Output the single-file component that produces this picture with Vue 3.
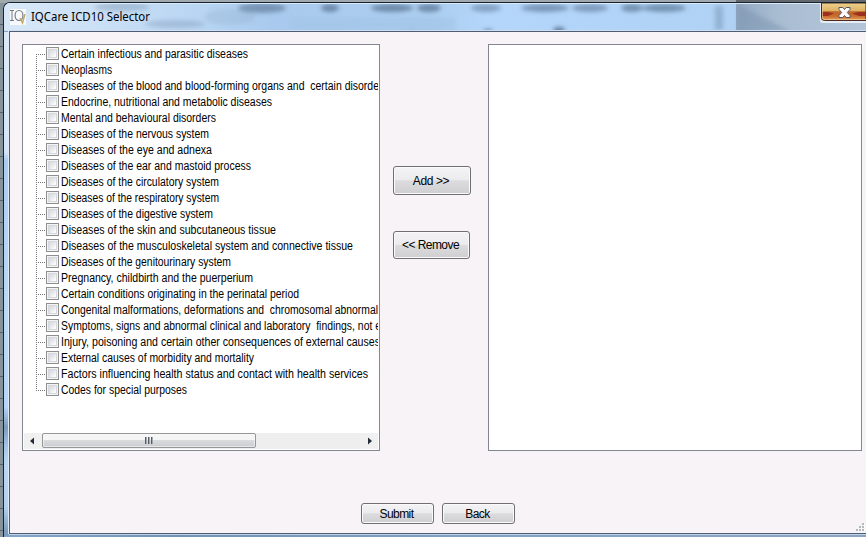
<script setup>
const nodes = [
  ['Certain infectious and parasitic diseases', 187],
  ['Neoplasms', 51],
  ['Diseases of the blood and blood-forming organs and \u00a0certain disorde', 318],
  ['Endocrine, nutritional and metabolic diseases', 211],
  ['Mental and behavioural disorders', 155],
  ['Diseases of the nervous system', 148],
  ['Diseases of the eye and adnexa', 151],
  ['Diseases of the ear and mastoid process', 190],
  ['Diseases of the circulatory system', 158],
  ['Diseases of the respiratory system', 158],
  ['Diseases of the digestive system', 152],
  ['Diseases of the skin and subcutaneous tissue', 215],
  ['Diseases of the musculoskeletal system and connective tissue', 292],
  ['Diseases of the genitourinary system', 170],
  ['Pregnancy, childbirth and the puerperium', 192],
  ['Certain conditions originating in the perinatal period', 238],
  ['Congenital malformations, deformations and \u00a0chromosomal abnormal', 317],
  ['Symptoms, signs and abnormal clinical and laboratory \u00a0findings, not e', 320],
  ['Injury, poisoning and certain other consequences of external causes', 319],
  ['External causes of morbidity and mortality', 193],
  ['Factors influencing health status and contact with health services', 307],
  ['Codes for special purposes', 126]
]
// Reflections of the window behind the glass title bar: [x, y, half width, half height, opacity]
const smudges = [
  [122, 7, 28, 4, 0.3], [262, 8, 24, 5, 0.6], [330, 8, 9, 4, 0.7], [392, 8, 21, 4, 0.7],
  [429, 8, 12, 4, 0.7], [486, 8, 15, 4, 0.5], [545, 8, 24, 4, 0.6], [590, 8, 18, 4, 0.55],
  [632, 8, 11, 4, 0.65], [664, 8, 22, 4, 0.65], [175, 24, 30, 4, 0.25], [488, 31, 5, 2, 0.7],
  [559, 30, 6, 3, 0.9], [412, 31, 3, 1, 0.3], [230, 17, 26, 8, 0.12]
]
</script>

<template>
  <div class="desktop">
    <div class="window">
      <header class="titlebar">
        <svg class="glass" width="862" height="28" viewBox="4 3 862 28">
          <defs>
            <linearGradient id="sky" x1="0" x2="1">
              <stop offset="0" stop-color="#d8e8f8" />
              <stop offset=".12" stop-color="#c9dff5" />
              <stop offset=".25" stop-color="#b5d3f2" />
              <stop offset=".31" stop-color="#a9caee" />
              <stop offset=".5" stop-color="#acceef" />
              <stop offset=".56" stop-color="#b4d6fb" />
              <stop offset=".82" stop-color="#b0d2f5" />
              <stop offset="1" stop-color="#b0c9e2" />
            </linearGradient>
            <linearGradient id="edge" x1="0" x2="1">
              <stop offset="0" stop-color="#8fa5be" />
              <stop offset=".12" stop-color="#9ab0c8" />
              <stop offset=".32" stop-color="#a9bdd2" />
              <stop offset="1" stop-color="#b4c5d9" />
            </linearGradient>
            <filter id="soft" x="-50%" y="-100%" width="200%" height="300%"><feGaussianBlur stdDeviation="2.2" /></filter>
          </defs>
          <rect x="4" y="3" width="862" height="28" fill="url(#sky)" />
          <rect x="290" y="18" width="165" height="13" fill="#9fc3e6" opacity=".5" filter="url(#soft)" />
          <rect x="736" y="3" width="130" height="28" fill="url(#edge)" />
          <path d="M738 5L790 31H738z" fill="#7c94b0" opacity=".5" filter="url(#soft)" />
          <rect x="715" y="6" width="8" height="24" fill="#809fbe" opacity=".6" filter="url(#soft)" />
          <g filter="url(#soft)">
            <ellipse v-for="(s, i) in smudges" :key="i" :cx="s[0]" :cy="s[1]" :rx="s[2]" :ry="s[3]" fill="#56718f" :opacity="s[4]" />
          </g>
          <rect x="4" y="3" width="862" height="1" fill="#dceafa" />
          <rect x="4" y="30" width="862" height="1" fill="#d0def0" />
        </svg>
        <svg class="logo" width="16" height="16" viewBox="0 0 16 16">
          <rect width="16" height="16" fill="#f8f9fb" />
          <path d="M0 1.5h4M2 1.5v10M0 11.5h4" stroke="#727984" fill="none" />
          <ellipse cx="9" cy="6.5" rx="3.9" ry="5" stroke="#737d8b" stroke-width="1.2" fill="none" />
          <path d="M10 9l2.5 5L15 5" stroke="#c1a765" stroke-width="1.4" fill="none" />
        </svg>
        <h1 class="title">
          <svg width="130" height="18"><text x="0" y="13" textLength="119" lengthAdjust="spacingAndGlyphs">IQCare ICD10 Selector</text></svg>
        </h1>
        <button class="close" aria-label="Close">
          <svg width="46" height="20" viewBox="0 0 46 20">
            <defs>
              <linearGradient id="gold" x2="0" y2="1">
                <stop offset="0" stop-color="#ecd28d" /><stop offset=".44" stop-color="#dfb265" />
                <stop offset=".5" stop-color="#bd662a" /><stop offset=".75" stop-color="#c86c2e" />
                <stop offset="1" stop-color="#e6a45f" />
              </linearGradient>
            </defs>
            <path d="M0 0v15q0 4 4 4h42" fill="none" stroke="#e6edf4" stroke-width="2" />
            <path d="M1.5 0v14.5q0 3 3 3H46V0z" fill="url(#gold)" stroke="#4b2a22" />
            <path d="M2 9h6l6 1.5L8 13H2zM46 9h-7l-7 1.5 7 2.5h7z" fill="#9c3020" />
            <path d="M2.5 1v13.5q0 2 2 2H46" fill="none" stroke="#f0c99a" opacity=".7" />
            <path d="M19 4.5h3.8l1.7 2 1.7-2H30v2l-2.7 3 2.7 3v2h-3.8l-1.7-2-1.7 2H19v-2l2.7-3-2.7-3z" fill="#fff" stroke="#535568" />
          </svg>
        </button>
      </header>
      <main class="client">
        <section class="panes">
          <div class="box tree">
            <ul class="nodes">
              <li v-for="[label, width] in nodes" :key="label">
                <i class="branch"></i><i class="check"></i>
                <svg class="label" width="317" height="16"><text x="0" y="12" :textLength="width" lengthAdjust="spacingAndGlyphs">{{ label }}</text></svg>
              </li>
            </ul>
            <div class="scrollbar">
              <span class="arrow"><svg width="18" height="16"><path d="M10 4.5v7L6 8z" fill="#252b37" /></svg></span>
              <span class="thumb"><i></i><i></i><i></i></span>
              <span class="arrow"><svg width="18" height="16"><path d="M8 4.5v7l4-3.5z" fill="#252b37" /></svg></span>
            </div>
          </div>
          <div class="transfer">
            <button class="btn add">Add &gt;&gt;</button>
            <button class="btn remove">&lt;&lt; Remove</button>
          </div>
          <div class="box selected"></div>
        </section>
        <footer class="actions">
          <button class="btn small">Submit</button>
          <button class="btn small">Back</button>
        </footer>
        <svg class="grip" width="10" height="10">
          <path d="M8 1h2v2H8zM8 4h2v2H8zM5 4h2v2H5zM8 7h2v2H8zM5 7h2v2H5zM2 7h2v2H2z" fill="#fff" />
          <path d="M7 1h2v2H7zM7 4h2v2H7zM4 4h2v2H4zM7 7h2v2H7zM4 7h2v2H4zM1 7h2v2H1z" fill="#b4b9bc" />
        </svg>
      </main>
    </div>
  </div>
</template>

<style>
html, body { margin: 0; overflow: hidden; }
</style>
<style scoped>
* { box-sizing: border-box; }
.desktop {
  width: 866px; height: 537px; padding: 2px 0 0 3px; overflow: hidden;
  background: repeating-linear-gradient(to bottom, transparent 0 21px, #58636c 21px 22px) 0 3px / 3px 100% no-repeat,
    linear-gradient(90deg, #a0a9ad 0 736px, #62686c 736px) 0 0 / 100% 3px no-repeat, #87939b;
  font-family: "Liberation Sans", Arial, sans-serif; color: #000;
}
.window {
  width: 863px; height: 535px; border: solid #172231; border-width: 1px 0 0 1px;
  border-radius: 7px 0 0 0; overflow: hidden; padding-bottom: 3px; display: flex; flex-direction: column;
  background: linear-gradient(90deg, #83a6c9, #7193b4 20%, #83a3c4 60%, #8ba4c1);
}
.titlebar { height: 28px; flex: none; display: flex; position: relative; padding-left: 6px; }
.glass { position: absolute; left: 0; top: 0; }
.logo { position: relative; margin-top: 6px; flex: none; }
.title { position: relative; margin: 5px 0 0 5px; height: 18px; font-weight: 400; }
.title svg { display: block; font: 12.5px "Noto Sans", sans-serif; }
.close { position: relative; margin-left: auto; padding: 0; border: 0; background: none; width: 46px; height: 20px; }
.close svg { display: block; }
.client {
  flex: 1; margin-left: 5px; border: solid #4e5d76; border-width: 1px 0 1px 1px;
  box-shadow: -1px 0 #dce9f6, 0 1px #c1d2e4; background: #f7f3f7;
  padding: 12px 4px 0 12px; position: relative;
}
.client::before {
  content: ""; position: absolute; left: -6px; top: 0; bottom: -3px; width: 4px;
  background: linear-gradient(#dce9f7 0, #d2e5f8 120px, #a9cdf2 128px, #bad9f8 280px, #b3d5f7 375px, #7d9dbe 395px, #a3c5e8 415px, #b9d7f4 430px, #b3d1ef 475px, #7c9cbe 500px);
}
.panes { display: flex; height: 407px; }
.box { border: 1px solid #828790; background: #fff; height: 407px; }
.tree { width: 358px; padding: 1px; display: flex; flex-direction: column; }
.nodes { list-style: none; margin: 0; padding: 0 0 0 12px; flex: 1; overflow: hidden; }
.nodes li { height: 16px; display: flex; align-items: flex-start; }
.branch { width: 10px; height: 16px; background:
  repeating-linear-gradient(90deg, #777 0 1px, transparent 1px 2px) 0 8px / 10px 1px no-repeat,
  repeating-linear-gradient(#777 0 1px, transparent 1px 2px) 0 0 / 1px 16px no-repeat; }
li:first-child .branch { background-position: 0 8px, 0 8px; }
li:last-child .branch { background-size: 10px 1px, 1px 9px; }
.check { width: 13px; height: 13px; margin-top: 1px; border: 1px solid #8e8f8f; background: linear-gradient(135deg, #c9ced7, #e5e7eb 48%, #fafafa 70%); box-shadow: inset 0 0 0 1px #f4f4f4, inset 0 0 0 2px #d6d8dc; flex: none; }
.label { margin-left: 2px; flex: none; font-size: 12px; overflow: visible; }
.scrollbar { height: 16px; display: flex; background: #eee; }
.arrow { width: 18px; height: 16px; background: #f0f0f0; }
.arrow svg { display: block; }
.arrow:last-child { margin-left: auto; }
.thumb { width: 214px; height: 15px; border: 1px solid #969696; border-radius: 2px; display: flex; gap: 1px; align-items: center; justify-content: center; background: linear-gradient(#f5f5f5 0 46%, #dadbdd 50%, #c9cbcf); box-shadow: inset 0 0 0 1px #fafafa99; }
.thumb i { width: 2px; height: 7px; background: linear-gradient(90deg, #555b66 50%, #a5a8ae 50%); }
.transfer { width: 108px; padding: 122px 0 0 13px; display: flex; flex-direction: column; align-items: flex-start; }
.btn { border: 1px solid #707070; border-radius: 3px; padding: 0 2px 0 0; font: 12px "Liberation Sans", Arial, sans-serif; letter-spacing: -.55px; color: #000; background: linear-gradient(#f4f2f4, #ebebed 48%, #dcdcdf 51%, #cfcfd2); box-shadow: inset 0 0 0 1px #fbfafb; }
.add { width: 78px; height: 29px; letter-spacing: -.4px; }
.remove { width: 77px; height: 28px; margin-top: 36px; }
.selected { width: 374px; }
.actions { display: flex; gap: 8px; margin: 52px 0 0 339px; }
.small { width: 73px; height: 21px; }
.grip { position: absolute; right: 1px; bottom: 1px; }
</style>
